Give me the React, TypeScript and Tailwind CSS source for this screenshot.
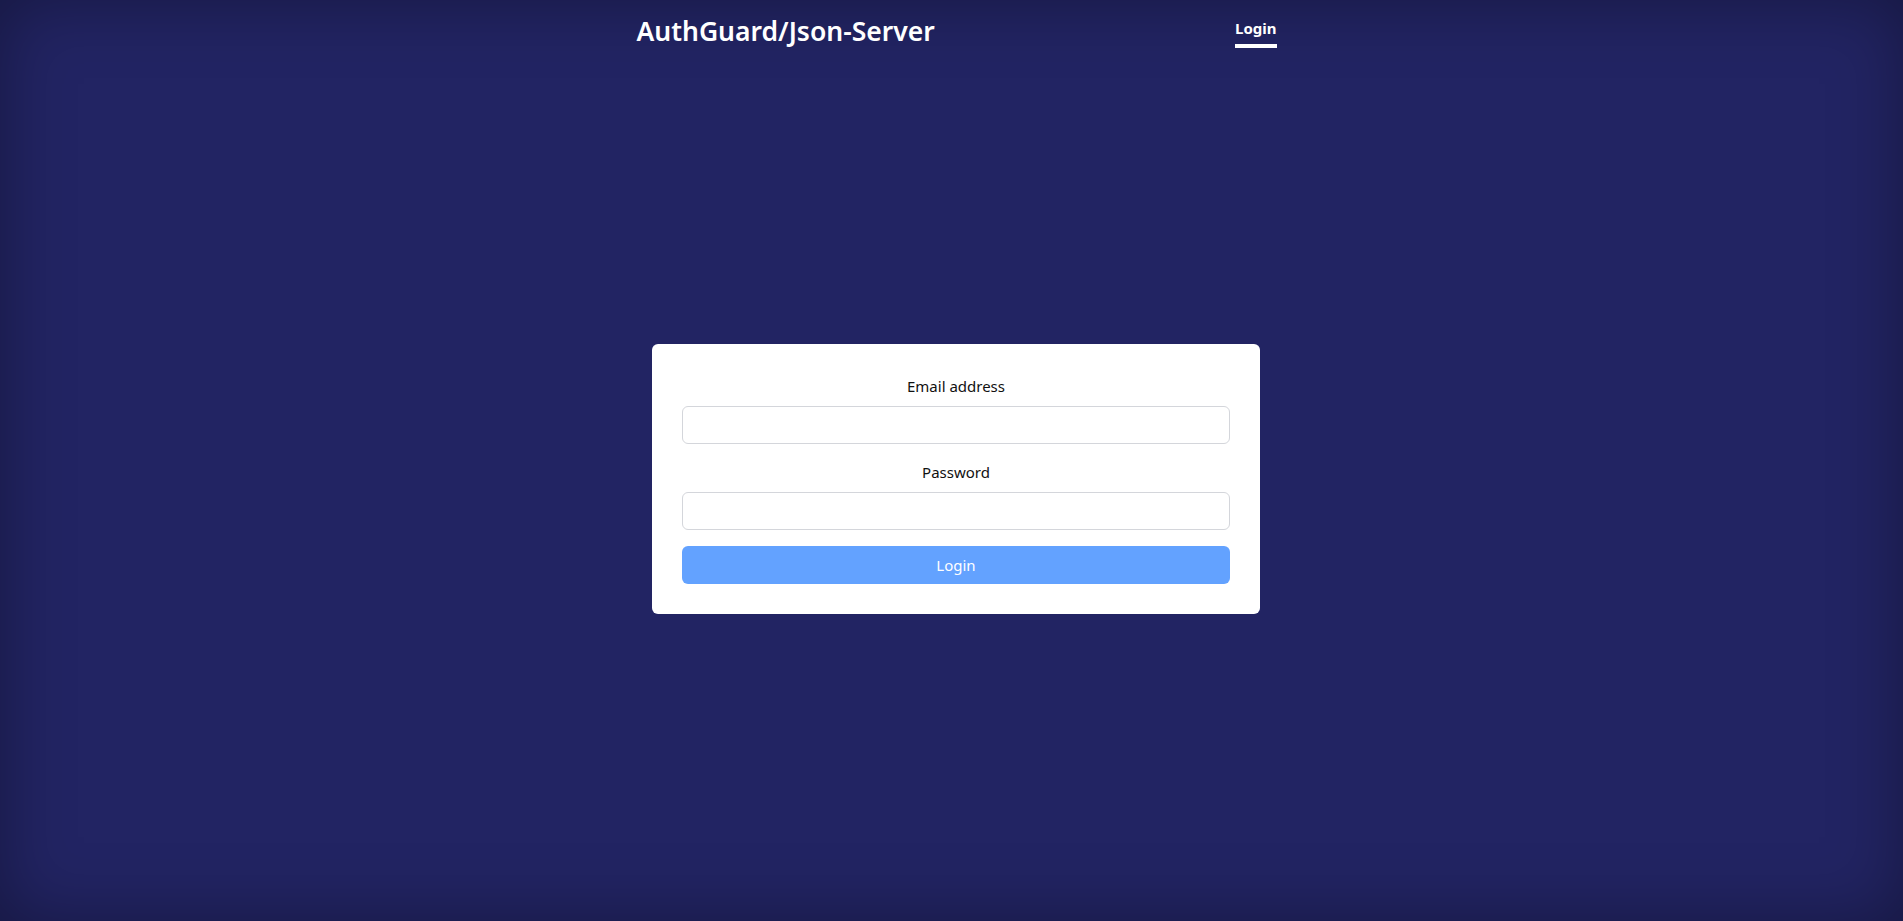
import React from "react";

function App() {
  return (
    <div
      className="min-h-screen flex flex-col bg-[#222463] shadow-[inset_0_0_70px_rgba(0,0,0,0.35)]"
      style={{ fontFamily: '"Noto Sans", "Open Sans", sans-serif' }}
    >
      {/* header */}
      <header className="h-[60px] flex justify-center">
        <div className="w-[640px] ml-[10px] flex justify-between">
          <h1 className="text-[26.5px] font-semibold text-white pt-[13px] leading-[36px]">
            AuthGuard/Json-Server
          </h1>
          <a
            href="#"
            className="text-[15px] font-bold text-white pt-[17px] leading-[22px] h-max border-b-[4px] border-white pb-[5px]"
          >
            Login
          </a>
        </div>
      </header>
      {/* form */}
      <main className="flex-1 flex items-center justify-center pb-[23px]">
        <form className="w-[608px] ml-[9px] bg-white rounded-md px-[30px] py-[30px] flex flex-col">
          <label className="text-center text-[15px] leading-[24px] text-[#111] mb-2">
            Email address
          </label>
          <input
            type="email"
            className="h-[38px] border border-[#d4d6db] rounded-md outline-none px-3"
          />
          <label className="text-center text-[15px] leading-[24px] text-[#111] mt-4 mb-2">
            Password
          </label>
          <input
            type="password"
            className="h-[38px] border border-[#d4d6db] rounded-md outline-none px-3"
          />
          <button
            type="button"
            className="mt-4 h-[38px] bg-[#63a2ff] text-white rounded-md text-[15px]"
          >
            Login
          </button>
        </form>
      </main>
    </div>
  );
}

export default App;
